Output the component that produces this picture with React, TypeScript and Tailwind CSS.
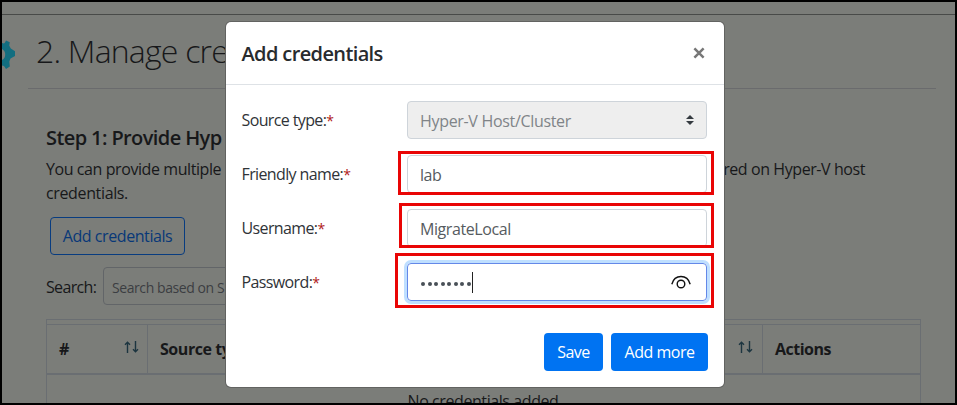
import type { ReactNode } from "react";

function SortArrows() {
  return (
    <svg width="15" height="13" viewBox="0 0 15 13" fill="none" stroke="#1c3540" strokeWidth="1.4" className="-mt-[3px]">
      <path d="M3.5 12V1.200M1 3.700 3.500 1.200 6 3.700" />
      <path d="M11.500 0v10.800M9 8.300l2.500 2.500 2.500-2.500" />
    </svg>
  );
}

function Gear() {
  return (
    <svg className="absolute left-0 top-[37px]" width="14" height="32" viewBox="0 0 14 32">
      <path
        fill="#126e80"
        fillRule="evenodd"
        d="M0 4 2 4.500 3 3.500 4 1.500 7.800 3.200 7.200 6.500 8.800 9.500 13 12.200V17L8.500 19.500 7.300 22.500 7.800 27.500 4 30 2 27 0 26.500V21Q3.400 19.500 3.200 15 3 11.500 0 10Z"
      />
    </svg>
  );
}

function Field({ label, children }: { label: string; children: ReactNode }) {
  return (
    <div className="flex h-[38px] items-center">
      <label className="w-[166px] pl-[0.5px] text-[16px] tracking-[-0.62px] text-[#2f3337]">
        {label}
        <span className="text-[14px] leading-none text-[#b01818]">*</span>
      </label>
      {children}
    </div>
  );
}

const inputBase = "flex h-[38px] w-[300px] items-center rounded-[4px] border px-3 text-[16px]";

function Modal() {
  return (
    <div className="absolute left-[224px] top-5 flex h-[365px] w-[498px] flex-col rounded-[5px] bg-white shadow-[0_0_0_1px_#626361]">
      <header className="flex h-[63px] items-center justify-between border-b border-[#dee2e6] pl-[15px] pr-[19px]">
        <h5 className="pl-[0.5px] pt-px text-[20px] font-semibold tracking-[-0.62px] text-[#282b2e]">Add credentials</h5>
        <svg width="12" height="12" viewBox="0 0 13 13" stroke="#777" strokeWidth="2.700">
          <path d="m1.500 1.500 10 10M11.500 1.500l-10 10" />
        </svg>
      </header>
      <div className="flex flex-col gap-4 pl-[15px] pt-4">
        <Field label="Source type:">
          <div className={`${inputBase} justify-between border-[#ced4da] bg-[#eee] tracking-[-0.32px] text-[#808488]`}>
            <span className="pt-px">Hyper-V Host/Cluster</span>
            <svg width="8" height="10" viewBox="0 0 8 10" fill="#343a40">
              <path d="M4 0 8 4H0ZM0 6h8L4 10Z" />
            </svg>
          </div>
        </Field>
        <Field label="Friendly name:">
          <div className={`${inputBase} border-[#ced4da] pt-[2px] tracking-[-0.42px] text-[#565b60]`}>lab</div>
        </Field>
        <Field label="Username:">
          <div className={`${inputBase} border-[#ced4da] pt-[2px] tracking-[-0.42px] text-[#565b60]`}>MigrateLocal</div>
        </Field>
        <Field label="Password:">
          <div className={`${inputBase} justify-between border-[#6488e8] shadow-[0_0_0_3px_#bfdfff]`}>
            <div className="flex items-center">
              <div className="flex gap-[2.5px] pl-px pt-[3px]">
                {Array.from({ length: 8 }, (_, i) => (
                  <i key={i} className="size-1 rounded-full bg-[#495057]" />
                ))}
              </div>
              <span className="ml-px h-[21px] w-px bg-[#222]" />
            </div>
            <svg width="20" height="14" viewBox="0 0 20 14" fill="none" stroke="#111" className="mr-[3px]">
              <path d="M.8 9.200C2.200 4.200 5.800 1.500 10 1.500s7.800 2.700 9.200 7.700" strokeWidth="1.400" />
              <circle cx="10" cy="9" r="3.800" strokeWidth="1.400" />
            </svg>
          </div>
        </Field>
      </div>
      <footer className="flex justify-end gap-2 pr-4 pt-8 text-[16px] font-medium tracking-[-0.5px] text-white">
        <button className="h-[38px] w-[59px] rounded-[4px] bg-[#0073f2]">Save</button>
        <button className="h-[38px] w-[97px] rounded-[4px] bg-[#0073f2]">Add more</button>
      </footer>
      <div className="absolute left-[172px] top-[129px] h-[44px] w-[316px] border-3 border-[#e90505]" />
      <div className="absolute left-[173px] top-[181px] h-[45px] w-[315px] border-3 border-[#e90505]" />
      <div className="absolute left-[169px] top-[231px] h-[55px] w-[319px] border-3 border-[#e90505]" />
    </div>
  );
}

export default function App() {
  return (
    <div className="relative h-[405px] w-[957px] overflow-hidden border-2 border-black bg-[#7b7d79] font-['Open_Sans','Noto_Sans',sans-serif] text-[#17181a]">
      <div className="h-[13px] border-b border-[#484a48]" />
      <Gear />
      <h1 className="ml-[26px] flex h-[74px] w-[908px] items-center border-b border-[#6a6b6d] pb-[2px] pl-[8px] text-[32px] font-light tracking-[-0.8px]">
        2. Manage cre
      </h1>
      <main className="ml-[44px] w-[875px] pt-[35px]">
        <h2 className="whitespace-nowrap text-[20px] font-semibold leading-[28px] tracking-[-0.6px]">
          Step 1: Provide Hyp
        </h2>
        <div className="flex h-[24px] justify-between pr-[56px] pt-[5px] text-[16px] leading-[24px] tracking-[-0.42px]">
          <span>You can provide multiple c</span>
          <span>red on Hyper-V host</span>
        </div>
        <p className="pt-[5px] text-[16px] leading-[24px] tracking-[-0.36px]">credentials.</p>
        <button className="ml-1 mt-[12px] block h-[38px] w-[135px] rounded-[4px] border border-[#083c80] text-[16px] tracking-[-0.42px] text-[#083878]">
          Add credentials
        </button>
        <div className="mt-3 flex h-[38px] items-center">
          <span className="w-[57px] pt-px text-[16px] tracking-[-0.65px]">Search:</span>
          <div className="flex h-[38px] w-[240px] items-center whitespace-nowrap rounded-[4px] border border-[#626568] pl-2 pt-[2px] text-[14px] tracking-[-0.42px] text-[#3b3e42]">
            Search based on S
          </div>
        </div>
        <div className="mt-[14px] h-[90px] border border-[#6a6e72]">
          <div className="mt-1 flex h-[51px] border-b-2 border-t border-[#6a6e72] text-[16px] font-bold tracking-[-0.6px]">
            <div className="flex w-[101px] items-center justify-between border-r border-[#6a6e72] pl-3 pr-2">
              <span>#</span>
              <SortArrows />
            </div>
            <div className="flex w-[615px] items-center justify-between border-r border-[#6a6e72] pl-3 pr-[9px]">
              <span className="tracking-[-0.45px]">Source ty</span>
              <SortArrows />
            </div>
            <div className="flex items-center pl-3 tracking-[-0.5px]">Actions</div>
          </div>
          <div className="pr-px pt-[14px] text-center text-[16px] leading-[24px] tracking-[-0.42px]">No credentials added</div>
        </div>
      </main>
      <Modal />
    </div>
  );
}
